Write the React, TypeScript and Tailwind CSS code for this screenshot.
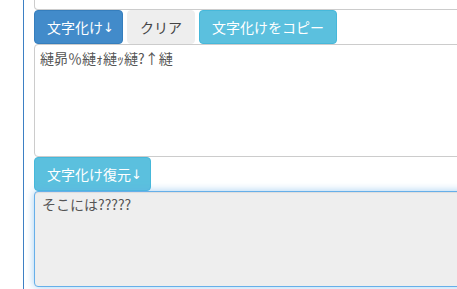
const font = { fontFamily: '"Noto Sans CJK JP", "Noto Sans", sans-serif' };
const arrowFont = { fontFamily: '"DejaVu Sans", sans-serif' };

const btn =
  'flex shrink-0 items-start rounded-[4px] border px-[12px] py-[6px] text-[14px] leading-[20px] whitespace-nowrap';

function Arrow() {
  return (
    <span className="block h-[20px] w-[7px] pt-[1px] text-[13px] leading-[20px]" style={arrowFont}>
      ↓
    </span>
  );
}

export default function App() {
  return (
    <div className="flex h-[289px] w-full overflow-hidden bg-white" style={font}>
      <div className="w-[23px] shrink-0" />
      <div className="flex flex-col border-l border-[#3d80c4] pl-[10px]">
        <div className="h-[10px] w-[600px] rounded-b-[4px] border-x border-b border-[#cccccc]" />
        <div className="flex gap-[4px]">
          <button className={`${btn} border-[#357ebd] bg-[#428bca] text-white`}>
            <span>文字化け</span>
            <Arrow />
          </button>
          <button className={`${btn} border-[#eeeeee] bg-[#eeeeee] text-[#444444]`}>クリア</button>
          <button className={`${btn} border-[#46b8da] bg-[#5bc0de] text-white`}>文字化けをコピー</button>
        </div>
        <textarea
          readOnly
          defaultValue="縺昴％縺ｫ縺ｯ縺?↑縺"
          className="h-[113px] w-[600px] resize-none rounded-[4px] border border-[#cccccc] px-[5px] py-[3px] text-[14px] leading-[20px] text-[#555555] outline-none"
          style={font}
        />
        <div className="flex">
          <button className={`${btn} border-[#46b8da] bg-[#5bc0de] text-white`}>
            <span>文字化け復元</span>
            <Arrow />
          </button>
        </div>
        <textarea
          readOnly
          defaultValue="そこには?????"
          className="h-[96px] w-[600px] resize-none rounded-[4px] border border-[#66afe9] bg-[#eeeeee] px-[7px] py-[2px] text-[14px] leading-[20px] text-[#555555] shadow-[inset_0_1px_1px_rgba(0,0,0,0.075),0_0_8px_rgba(102,175,233,0.6)] outline-none"
          style={font}
        />
      </div>
    </div>
  );
}
